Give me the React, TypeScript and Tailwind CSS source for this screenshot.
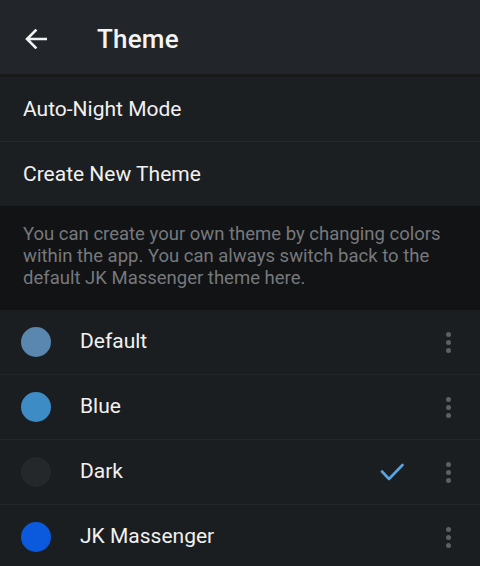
import React from "react";

const themes = [
  { name: "Default", color: "bg-[#5a87b0]", checked: false },
  { name: "Blue", color: "bg-[#3d8cc5]", checked: false },
  { name: "Dark", color: "bg-[#24282b]", checked: true },
  { name: "JK Massenger", color: "bg-[#0b5ade]", checked: false },
];

function Dots() {
  return (
    <div className="flex flex-col items-center gap-[3px] w-[6px]">
      <span className="w-[5px] h-[5px] rounded-full bg-[#5d6063]" />
      <span className="w-[5px] h-[5px] rounded-full bg-[#5d6063]" />
      <span className="w-[5px] h-[5px] rounded-full bg-[#5d6063]" />
    </div>
  );
}

export default function App() {
  return (
    <div
      className="w-[480px] h-[566px] overflow-hidden bg-[#1b1e21] text-white"
      style={{ fontFamily: "Roboto, 'Noto Sans', sans-serif" }}
    >
      <div className="h-[74px] bg-[#22262a] flex items-center pt-[4px]">
        <div className="w-[97px] pl-[25px] flex items-center">
          <svg width="22" height="20" viewBox="0 0 22 20" fill="none">
            <path d="M21 10H2.5M10.5 1.5L2 10l8.5 8.5" stroke="#f2f2f2" strokeWidth="2.6" strokeLinecap="square" />
          </svg>
        </div>
        <span className="text-[26px] font-medium tracking-[0.2px] text-[#f4f4f4]">Theme</span>
      </div>
      <div className="h-[3px] bg-[#17191b]" />
      <div className="h-[64px] flex items-center pl-[23px] pt-[2px] text-[21px] text-[#f1f1f1] bg-[#1c1f22]">
        Auto-Night Mode
      </div>
      <div className="h-px bg-[#25292c]" />
      <div className="h-[64px] flex items-center pl-[23px] pt-[2px] text-[21px] text-[#f1f1f1] bg-[#1c1f22]">
        Create New Theme
      </div>
      <div className="h-[104px] bg-[#111315] px-[23px] pt-[17px] text-[18.5px] leading-[22px] text-[#77797c]">
        You can create your own theme by changing colors within the app. You can always switch back to the default JK Massenger theme here.
      </div>
      <div className="bg-[#1b1e21]">
        {themes.map((t, i) => (
          <React.Fragment key={t.name}>
            {i > 0 && <div className="h-px bg-[#222629]" />}
            <div className="h-[64px] flex items-center pl-[21px] pr-[29px]">
              <span className={`w-[30px] h-[30px] rounded-full ${t.color}`} />
              <span className="ml-[29px] flex-1 text-[21px] text-[#f1f1f1]">{t.name}</span>
              {t.checked && (
                <svg width="24" height="18" viewBox="0 0 24 18" className="mr-[41px]" fill="none">
                  <path d="M2 8.5l7 7.5L22.5 2" stroke="#5aa3de" strokeWidth="2.6" strokeLinecap="round" strokeLinejoin="round" />
                </svg>
              )}
              <Dots />
            </div>
          </React.Fragment>
        ))}
      </div>
    </div>
  );
}
